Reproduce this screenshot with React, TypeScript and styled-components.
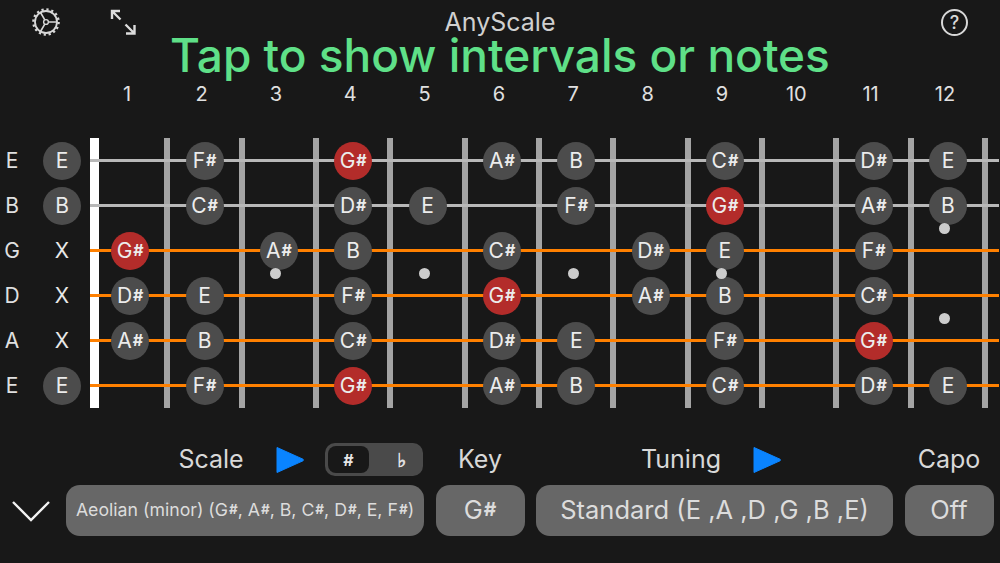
import { FC, ReactNode } from "react"
import styled, { createGlobalStyle } from "styled-components"

const strings = [
  { name: "E", open: "E", active: false, notes: { 2: "F", 4: "G", 6: "A", 7: "B", 9: "C", 11: "D", 12: "E" } },
  { name: "B", open: "B", active: false, notes: { 2: "C", 4: "D", 5: "E", 7: "F", 9: "G", 11: "A", 12: "B" } },
  { name: "G", open: "", active: true, notes: { 1: "G", 3: "A", 4: "B", 6: "C", 8: "D", 9: "E", 11: "F" } },
  { name: "D", open: "", active: true, notes: { 1: "D", 2: "E", 4: "F", 6: "G", 8: "A", 9: "B", 11: "C" } },
  { name: "A", open: "", active: true, notes: { 1: "A", 2: "B", 4: "C", 6: "D", 7: "E", 9: "F", 11: "G" } },
  { name: "E", open: "E", active: true, notes: { 2: "F", 4: "G", 6: "A", 7: "B", 9: "C", 11: "D", 12: "E" } },
] as { name: string; open: string; active: boolean; notes: Record<number, string> }[]

const frets = [1, 2, 3, 4, 5, 6, 7, 8, 9, 10, 11, 12]

// inlay dots sit on the line under a given string
const inlays: Record<number, number[]> = { 1: [12], 2: [3, 5, 7, 9], 3: [12] }

const withSharps = (text: string): ReactNode =>
  text.split("#").map((part, i) => (
    <span key={i}>
      {i > 0 && <Sharp>#</Sharp>}
      {part}
    </span>
  ))

const noteLabel = (note: string) => (note === "B" || note === "E" ? note : note + "#")

const GearIcon: FC = () => (
  <svg width="30" height="30" viewBox="0 0 30 30" fill="none" stroke="#d8d8d8">
    <circle cx="15" cy="15" r="11" strokeWidth="1.8" />
    <circle cx="15" cy="15" r="12.6" strokeWidth="2.4" strokeDasharray="2.2 2.75" />
    <circle cx="15" cy="15" r="2.4" strokeWidth="1.4" />
    <path d="M17.4 15H26M13.8 17.1L9.5 24.5M13.8 12.9L9.5 5.5" strokeWidth="1.6" />
  </svg>
)

const ExpandIcon: FC = () => (
  <svg width="26" height="26" viewBox="0 0 26 26" fill="none" stroke="#dcdcdc" strokeWidth="2.4">
    <path d="M2 10V2H10M2 2L10.5 10.5" />
    <path d="M24.5 16V24.5H16M24.5 24.5L15.5 15.5" />
  </svg>
)

const PlayIcon: FC = () => (
  <svg width="28" height="28" viewBox="0 0 28 28">
    <path d="M1 1.5L27 13.2Q28 14 27 14.8L1 26.5Z" fill="#0a84ff" stroke="#0a84ff" strokeLinejoin="round" />
  </svg>
)

const ChevronIcon: FC = () => (
  <svg width="38" height="22" viewBox="0 0 38 22" fill="none" stroke="#f2f2f2" strokeWidth="2.4">
    <path d="M1 2L19 20L37 2" />
  </svg>
)

const App: FC = () => {
  return (
    <Screen>
      <GlobalStyle />
      <TopBar>
        <TopLeft>
          <GearIcon />
          <ExpandIcon />
        </TopLeft>
        <Title>AnyScale</Title>
        <TopRight>
          <HelpButton>?</HelpButton>
        </TopRight>
      </TopBar>
      <Hint>Tap to show intervals or notes</Hint>
      <FretNumbers>
        {frets.map((fret) => (
          <FretNumber key={fret}>{fret}</FretNumber>
        ))}
      </FretNumbers>
      <Board>
        {strings.map((string, index) => (
          <StringRow key={index}>
            <StringName>{string.name}</StringName>
            <OpenSlot>
              {string.open ? <Note>{string.open}</Note> : <Muted>X</Muted>}
            </OpenSlot>
            <Neck $active={string.active}>
              {frets.map((fret) => {
                const note = string.notes[fret]
                return (
                  <FretCell key={fret}>
                    {note && (
                      <Note $root={note === "G"}>{withSharps(noteLabel(note))}</Note>
                    )}
                    {inlays[index]?.includes(fret) && <Inlay />}
                  </FretCell>
                )
              })}
            </Neck>
          </StringRow>
        ))}
      </Board>
      <Controls>
        <span />
        <ControlHead>
          <ScaleLabel>Scale</ScaleLabel>
          <PlaySlot>
            <PlayIcon />
          </PlaySlot>
          <Segmented>
            <SharpSegment>#</SharpSegment>
            <FlatSegment>♭</FlatSegment>
          </Segmented>
        </ControlHead>
        <Label>Key</Label>
        <ControlHead>
          <TuningLabel>Tuning</TuningLabel>
          <PlayIcon />
        </ControlHead>
        <Label>Capo</Label>

        <ChevronSlot>
          <ChevronIcon />
        </ChevronSlot>
        <SmallButton>{withSharps("Aeolian (minor) (G#, A#, B, C#, D#, E, F#)")}</SmallButton>
        <Button>{withSharps("G#")}</Button>
        <Button>Standard (E ,A ,D ,G ,B ,E)</Button>
        <Button>Off</Button>
      </Controls>
    </Screen>
  )
}

const GlobalStyle = createGlobalStyle`
  html, body {
    margin: 0;
    padding: 0;
    background: #181818;
  }
`

const Screen = styled.div`
  width: 1000px;
  height: 563px;
  overflow: hidden;
  background: #181818;
  color: #dcdcdc;
  font-family: Inter, "Liberation Sans", sans-serif;
`

const TopBar = styled.div`
  display: grid;
  grid-template-columns: 1fr auto 1fr;
  align-items: center;
  height: 44px;
  margin-bottom: -10px;
`

const TopLeft = styled.div`
  display: flex;
  align-items: center;
  gap: 49px;
  padding-left: 31px;
`

const TopRight = styled.div`
  display: flex;
  justify-content: flex-end;
  padding-right: 32px;
`

const Title = styled.div`
  font-size: 25px;
  line-height: 24px;
  color: #d0d0d0;
`

const HelpButton = styled.div`
  width: 23px;
  height: 23px;
  border: 2px solid #d8d8d8;
  border-radius: 50%;
  display: flex;
  align-items: center;
  justify-content: center;
  font-size: 18px;
  font-weight: 500;
  color: #d8d8d8;
`

const Hint = styled.div`
  height: 42px;
  line-height: 42px;
  text-align: center;
  font-size: 46px;
  font-weight: 500;
  color: #5fe088;
`

const FretNumbers = styled.div`
  display: flex;
  height: 36px;
  margin-bottom: 26px;
  padding-left: 90px;
  align-items: center;
`

const FretNumber = styled.div`
  width: 74.35px;
  text-align: center;
  font-size: 20px;
  color: #e0e0e0;
`

const Board = styled.div`
  display: flex;
  flex-direction: column;
`

const StringRow = styled.div`
  display: flex;
  align-items: center;
  height: 45px;
`

const StringName = styled.div`
  width: 24px;
  text-align: center;
  font-size: 21px;
  color: #e0e0e0;
`

const OpenSlot = styled.div`
  width: 66px;
  display: flex;
  justify-content: center;
  padding-left: 19px;
  padding-right: 9px;
  box-sizing: border-box;
`

const Muted = styled.div`
  width: 38px;
  text-align: center;
  font-size: 21px;
  color: #e8e8e8;
`

const Neck = styled.div<{ $active: boolean }>`
  position: relative;
  display: flex;
  align-self: stretch;
  width: 909px;
  padding-left: 3px;
  box-sizing: border-box;

  &::before {
    content: "";
    position: absolute;
    left: 0;
    top: 0;
    bottom: 0;
    width: 9px;
    background: #ffffff;
  }

  &::after {
    content: "";
    position: absolute;
    left: 0;
    right: 0;
    top: 21px;
    height: 3px;
    background: ${(p) => (p.$active ? "#ff8000" : "#b8b8b8")};
    z-index: 1;
  }
`

const FretCell = styled.div`
  position: relative;
  width: 74.35px;
  display: flex;
  align-items: center;
  justify-content: center;

  &::after {
    content: "";
    position: absolute;
    right: -3px;
    top: 0;
    bottom: 0;
    width: 6px;
    background: #a4a4a4;
  }
`

const Note = styled.div<{ $root?: boolean }>`
  position: relative;
  z-index: 2;
  width: 38px;
  height: 38px;
  border-radius: 50%;
  display: flex;
  align-items: center;
  justify-content: center;
  background: ${(p) => (p.$root ? "#b32c2a" : "#4c4c4c")};
  font-size: 21px;
  color: #ececec;
`

const Sharp = styled.span`
  font-size: 0.76em;
  font-weight: 700;
  vertical-align: 0.14em;
  margin-left: 1px;
`

const Inlay = styled.div`
  position: absolute;
  z-index: 3;
  left: calc(50% - 8.5px);
  bottom: -5.5px;
  width: 11px;
  height: 11px;
  border-radius: 50%;
  background: #cccccc;
`

const Controls = styled.div`
  display: grid;
  grid-template-columns: 54.5px 358px 89px 357px 89px;
  grid-template-rows: 33px 51px;
  column-gap: 11.5px;
  row-gap: 9px;
  margin-top: 35px;
`

const ControlHead = styled.div`
  display: flex;
  align-items: center;
`

const Label = styled.div`
  display: flex;
  align-items: center;
  justify-content: center;
  padding-bottom: 2px;
  font-size: 25px;
  color: #d8d8d8;
`

const ScaleLabel = styled(Label)`
  margin-left: 111px;
  width: 68px;
`

const TuningLabel = styled(Label)`
  margin-left: 103px;
  width: 84px;
  margin-right: 30px;
`

const PlaySlot = styled.div`
  display: flex;
  margin-left: 31px;
  margin-right: 21px;
`

const Segmented = styled.div`
  display: flex;
  justify-content: space-between;
  width: 98px;
  height: 33px;
  padding: 3px;
  box-sizing: border-box;
  border-radius: 10px;
  background: #4a4a4a;
`

const SharpSegment = styled.div`
  width: 41px;
  display: flex;
  align-items: center;
  justify-content: center;
  border-radius: 8px;
  background: #181818;
  font-size: 16px;
  font-weight: 700;
  color: #e6e6e6;
`

const FlatSegment = styled.div`
  width: 36px;
  display: flex;
  align-items: center;
  justify-content: center;
  font-family: "DejaVu Sans", sans-serif;
  font-size: 19px;
  font-weight: 700;
  color: #e6e6e6;
  -webkit-text-stroke: 0.6px #e6e6e6;
`

const ChevronSlot = styled.div`
  display: flex;
  align-items: center;
  padding-left: 12px;
`

const Button = styled.div`
  display: flex;
  align-items: center;
  justify-content: center;
  padding-bottom: 2px;
  box-sizing: border-box;
  border-radius: 14px;
  background: #676767;
  font-size: 25.5px;
  color: #dcdcdc;
  white-space: nowrap;
`

const SmallButton = styled(Button)`
  font-size: 17.7px;
`

export default App
